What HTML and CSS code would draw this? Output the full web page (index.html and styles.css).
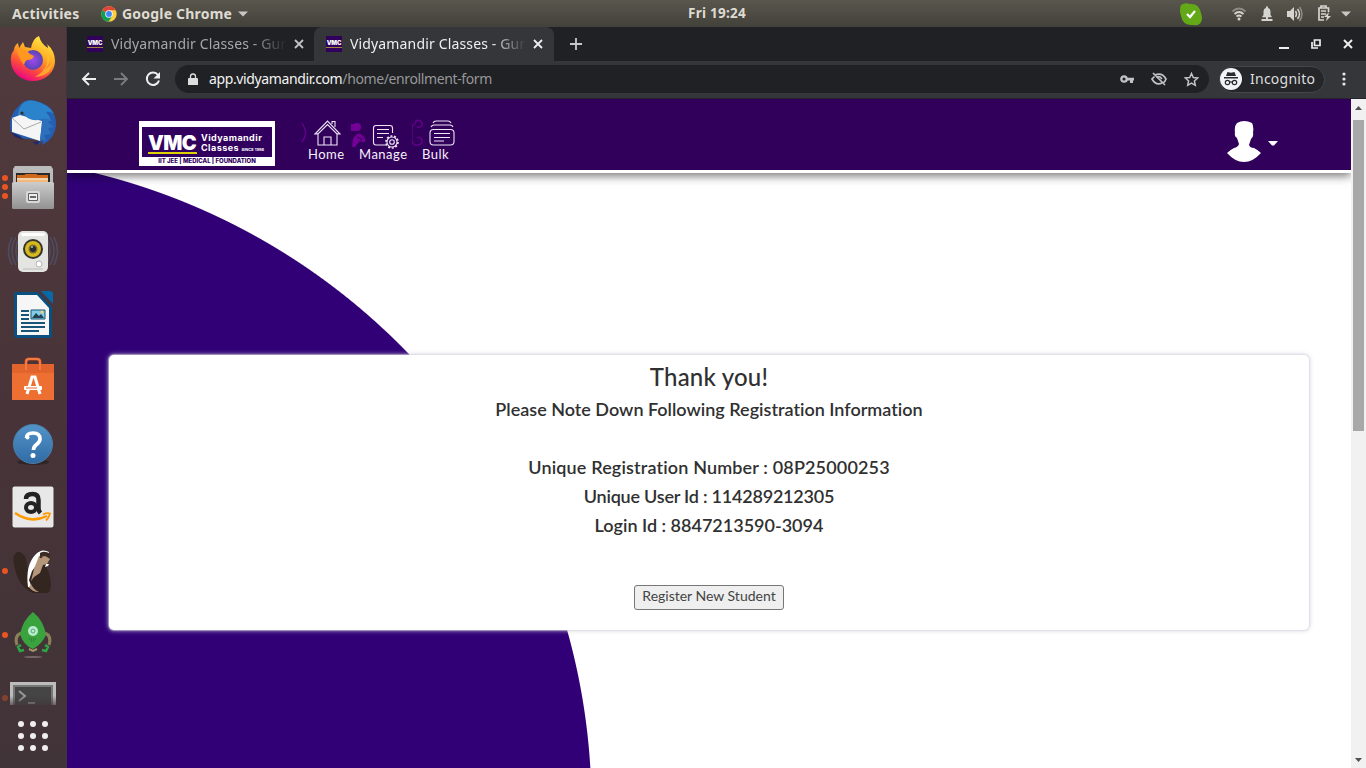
FILE: index.html
```html
<!DOCTYPE html>
<html lang="en">
<head>
<meta charset="utf-8">
<title>Vidyamandir Classes</title>
<link rel="stylesheet" href="styles.css">
</head>
<body>
<div class="desktop">
  <header class="topbar">
    <span class="activities">Activities</span>
    <svg class="chrome-logo" width="16" height="16" viewBox="0 0 16 16"><circle cx="8" cy="8" r="7.7" fill="#ffcd40"/><path d="M8 8 1.3 4.2A7.7 7.7 0 0 1 14.7 4.2H8Z" fill="#e0443a"/><path d="M1.3 4.2A7.7 7.7 0 0 0 7.5 15.7L11.3 10 8 8Z" fill="#0f9d58"/><circle cx="8" cy="8" r="3.8" fill="#f4f4f4"/><circle cx="8" cy="8" r="2.9" fill="#4285f4"/></svg>
    <span class="appname">Google Chrome</span>
    <svg class="app-caret" width="10" height="6" viewBox="0 0 10 6"><path d="M0 0.500h10L5 5.500Z" fill="#c8c7c4"/></svg>
    <span class="clock">Fri 19:24</span>
    <div class="tray">
      <svg width="24" height="24" viewBox="0 0 24 24"><path d="M2 3Q6 0 11 2Q20 1 22 11Q24 17 22 20Q20 24 14 23Q4 24 2 14Q0 7 2 3Z" fill="#63a917"/><path d="m8 12 3 3 5-6" fill="none" stroke="#fff" stroke-width="2.200"/></svg>
      <svg class="wifi" width="16" height="16" viewBox="0 0 16 16" fill="none" stroke="#d5d4d0" stroke-width="1.800"><path d="M1.500 5.500Q8-0.500 14.500 5.500" opacity=".45"/><path d="M3.500 8Q8 4 12.500 8M5.500 10.500Q8 8.500 10.500 10.500"/><circle cx="8" cy="13" r="1.500" fill="#d5d4d0" stroke="none"/></svg>
      <svg class="bell" width="14" height="16" viewBox="0 0 14 16" fill="#d5d4d0"><path d="M6 .5h2V2q2.500.5 2.500 4v3l1.200 1.500v.8H2.300v-.8L3.500 9V6Q3.500 2.500 6 2ZM6 11h2v2h4.500v2h-11v-2H6Z"/></svg>
      <svg class="sound" width="17" height="16" viewBox="0 0 17 16"><path d="M1 5h3l4-4v14l-4-4H1Z" fill="#d5d4d0"/><path d="M9.500 5q2 3 0 6M11.500 3q4 5 0 10" fill="none" stroke="#d5d4d0" stroke-width="1.500"/><path d="M13.500 1q5 7 0 14" fill="none" stroke="#8e8c85" stroke-width="1.500"/></svg>
      <svg class="battery" width="16" height="17" viewBox="0 0 16 17"><path d="M4 3V1h5v2h2.500v4M7 15H2V3h9M4 6h5M4 9h5M4 12h3" fill="none" stroke="#d5d4d0" stroke-width="1.700"/><path d="m12 7-5 5h3l-1 4 5-5h-3Z" fill="#d5d4d0"/></svg>
      <svg class="tray-caret" width="10" height="6" viewBox="0 0 10 6"><path d="M0 .5h10L5 5.500Z" fill="#c8c7c4"/></svg>
    </div>
  </header>
  <div class="workspace">
    <nav class="dock">
      <div class="app"><svg width="48" height="48" viewBox="0 0 48 48"><defs><linearGradient id="ff" x1=".8" y1="0" x2=".3" y2="1"><stop offset="0" stop-color="#fff14a"/><stop offset=".4" stop-color="#ffad24"/><stop offset=".7" stop-color="#ff5038"/><stop offset="1" stop-color="#e80089"/></linearGradient><radialGradient id="fp"><stop offset="0" stop-color="#a049ee"/><stop offset="1" stop-color="#5944b4"/></radialGradient></defs><path d="M5 15Q5 11 9 8l1 5 4-6 2 5 6 1Q24 3 30 1q2 8 9 12 0-2-1-4 8 7 8 17A22 20 0 0 1 2 26Q1 20 5 15Z" fill="url(#ff)"/><circle cx="24" cy="25" r="10" fill="url(#fp)"/><path d="M8 15q6-3 13 4l4 2q-1 4-7 4-3 2-3 5Q10 24 8 15Z" fill="#ff9820"/><path d="M36 12q9 13 0 22 5-2 8-7-2 14-18 15 18-10 10-30Z" fill="#ffbd2e" opacity=".75"/></svg></div>
      <div class="app"><svg width="50" height="50" viewBox="0 0 50 50"><path d="M12 7Q18 0 28 3q19 4 20 22 0 15-14 22l1-4-6 4 2-5L12 40 3 34Q-1 18 12 7Z" fill="#245fb1"/><path d="m4 20 8-3 22 6-2 20-28-9Z" fill="#f5f5f5"/><path d="m4 20 12 11 17-7" stroke="#aaa" fill="none"/><path d="M10 17Q12 0 27 3q15 4 19 13-4-3-8-2 4 4 5 9-8-3-13-1-10 1-14-6-4 1-6 1Z" fill="#2b84cb"/><path d="m35 20 10 2-5 2 6 5-6 1 3 6-7 1 2 6-6-2Z" fill="#2d70bc"/><path d="m3 34 9 4 4 4-9-3ZM24 44l9-1-4 4Z" fill="#242766"/><circle cx="14" cy="15" r="1.500" fill="#322c29"/></svg></div>
      <div class="app"><i class="dot dot-top"></i><i class="dot"></i><i class="dot dot-bottom"></i><svg width="44" height="46" viewBox="0 0 44 46"><defs><linearGradient id="fg" x2="0" y2="1"><stop stop-color="#ccc"/><stop offset="1" stop-color="#929292"/></linearGradient></defs><path d="M4 2h36l2 3v17H2V5Z" fill="#bbb"/><path d="M5 9h34v10H5Z" fill="#292929"/><path d="M6 11h7l2-1h10l2 1h10v8H6Z" fill="#cf691b"/><path d="M6 14h31v5H6Z" fill="#f2b87c"/><path d="M6 15h31" stroke="#f4ead7"/><rect x="1" y="18" width="42" height="27" rx="1.500" fill="url(#fg)"/><rect x="15" y="27" width="14" height="12" rx="2" fill="#d8d8d8"/><rect x="17" y="29" width="10" height="8" rx="1" fill="#606060"/><path d="M18 30h8v6h-8Z" fill="#eee"/><path d="M19 32h6v2h-6Z" fill="#666"/></svg></div>
      <div class="app"><svg width="50" height="46" viewBox="0 0 50 46"><path d="M8 9Q0 23 8 37M4 9Q-3 23 4 37M12 8Q4 23 12 38M42 9Q50 23 42 37M46 9Q53 23 46 37M38 8Q46 23 38 38" fill="none" stroke="#536b92" stroke-width="1.500" opacity=".45"/><rect x="10" y="3" width="30" height="41" rx="5" fill="#e4e4e0"/><rect x="13" y="5" width="24" height="3" rx="2" fill="#fff"/><circle cx="25" cy="21" r="10" fill="#34342f"/><circle cx="25" cy="21" r="8" fill="#d8b91d"/><circle cx="25" cy="21" r="4.500" fill="#796f2e"/><circle cx="25" cy="21" r="3" fill="#292b30"/><path d="M23 19h2" stroke="#fff"/><circle cx="31" cy="36" r="3" fill="#fff" stroke="#b5b5b5"/><path d="M15 41h20" stroke="#bbb"/></svg></div>
      <div class="app"><svg width="40" height="48" viewBox="0 0 40 48"><path d="M3 1h22l14 15v29q0 2-3 2H4q-3 0-3-3V3Q1 1 3 1Z" fill="#0b4f81"/><path d="M4 4h20l12 13v27H4Z" fill="#f6f6f6"/><path d="M28 0h9q3 0 3 3v10Z" fill="#0869a8"/><path d="M8 20h8M8 24h8M8 28h8M8 32h24M8 36h24M8 40h18" stroke="#165579" stroke-width="2"/><path d="M18 19h14v9H18Z" fill="#83cce9" stroke="#175777"/><path d="m19 27 4-5 3 3 2-2 3 4Z" fill="#244150"/><circle cx="29" cy="21" r="1.500" fill="#f7cf63"/></svg></div>
      <div class="app"><svg width="44" height="46" viewBox="0 0 44 46"><path d="M15 13V6q0-3 3-3h8q3 0 3 3v7" fill="none" stroke="#c64a1d" stroke-width="3"/><path d="M1 8h42v36H1Z" fill="#ed7032"/><path d="M1 8h42v9H1Z" fill="#e2632b"/><path d="M15 14V6q0-3 3-3h8q3 0 3 3v8" fill="none" stroke="#f37a45" stroke-width="2"/><path d="m16 38 5-17h3l5 17" fill="none" stroke="#fff" stroke-width="3"/><rect x="13" y="30" width="18" height="4" rx="1" fill="#fff"/><path d="M15 32h11" stroke="#ec6b2d"/></svg></div>
      <div class="app"><svg class="help-icon" width="42" height="44" viewBox="0 0 42 44"><defs><linearGradient id="help" x2="0" y2="1"><stop stop-color="#5394c8"/><stop offset="1" stop-color="#306ba6"/></linearGradient></defs><ellipse cx="21" cy="39" rx="16" ry="3" fill="#302529"/><circle cx="21" cy="21" r="19.500" fill="url(#help)" stroke="#4a80a8"/><path d="M14.500 15q0-5 6.500-5 7 0 7 6 0 3-4 6-2.500 2-2.500 5" fill="none" stroke="#fff" stroke-width="3.600"/><circle cx="15.500" cy="14.500" r="2" fill="#fff"/><circle cx="21" cy="32.500" r="2.500" fill="#fff"/></svg></div>
      <div class="app"><svg width="42" height="42" viewBox="0 0 42 42"><rect x=".5" y=".5" width="41" height="41" rx="2" fill="#e8e8e8"/><path d="M14 13q0-5 6.500-5 6 0 6 6v8q0 3 2 5" fill="none" stroke="#222" stroke-width="4.500"/><ellipse cx="19" cy="21.500" rx="5" ry="4.500" fill="none" stroke="#222" stroke-width="4"/><path d="M3 27q16 11 32 3" fill="none" stroke="#ff9900" stroke-width="2.500"/><path d="M31 28.500q4-2 7-1-1 4-4 7" fill="none" stroke="#ff9900" stroke-width="1.800"/></svg></div>
      <div class="app"><i class="dot"></i><svg width="42" height="48" viewBox="0 0 42 48"><path d="M21 46Q7 40 3 22-1 9 5 5q9 0 10 13l3 15q-2-20 9-29l10 2 1 7-4 6q7 14 4 25l-3 2Z" fill="#33251f"/><path d="M16 40q-3-22 8-33 6-6 13-2l-1 2-8 3-2 6-6 8-3 9 3 8Z" fill="#fff"/><path d="m27 9 6-1 5 4-3 5-4 1-3 8-6 4-3 4 3-12Z" fill="#b4967a"/><path d="M28 6q5-3 10 1l-1 4-4-2-5 1Z" fill="#3b2b25"/><circle cx="29" cy="10" r="1.300" fill="#493225"/><path d="M34 17h3l-1 2-3 1Z" fill="#fff"/><path d="M19 37q2 5 8 8-7 0-10-5Z" fill="#b4967a"/></svg></div>
      <div class="app"><i class="dot"></i><svg width="38" height="50" viewBox="0 0 38 50"><path d="M7 23q-7 3-4 12M31 23q7 3 4 12" fill="none" stroke="#8b805c" stroke-width="3"/><path d="M19 2Q30 11 32 25q-4 9-13 14Q9 35 6 24 9 10 19 2Z" fill="#3ba33e"/><path d="m15 39 4 2 4-2" stroke="#a39768" stroke-width="2" fill="none"/><circle cx="19" cy="21" r="5" fill="#b9edce"/><circle cx="19" cy="21" r="2" fill="none" stroke="#58a775"/><path d="M15 29h8M17 31h4" stroke="#226b32" stroke-dasharray="1 1"/><path d="m10 40-4 1-2-4 3-2M28 40l4 1 2-4-3-2" stroke="#2ca744" stroke-width="2.500" fill="none"/><ellipse cx="19" cy="47" rx="9" ry="1" fill="#75666a"/></svg></div>
      <div class="app terminal"><i class="dot dim"></i><svg width="46" height="23" viewBox="0 0 46 23"><defs><linearGradient id="tf" x2="0" y2="1"><stop stop-color="#fff"/><stop offset=".6" stop-color="#fff"/><stop offset="1" stop-color="#555"/></linearGradient><mask id="tm"><path d="M0 0h46v23H0Z" fill="url(#tf)"/></mask></defs><g mask="url(#tm)"><path d="M0 0h46v23H0Z" fill="#bcbcbc"/><path d="M3 3h40v20H3Z" fill="#777"/><path d="M5 5h36v18H5Z" fill="#454545"/><path d="m9 9 6 5-6 5M18 21h7" stroke="#999" stroke-width="2" fill="none"/></g></svg></div>
      <div class="app-grid"><i></i><i></i><i></i><i></i><i></i><i></i><i></i><i></i><i></i></div>
    </nav>
    <main class="browser">
      <div class="tabs">
        <div class="tab">
          <span class="favicon">VMC</span><span class="tab-title"><span>Vidyamandir Classes - Gur</span></span>
          <svg width="10" height="10" viewBox="0 0 10 10"><path d="m1 1 8 8M9 1 1 9" stroke="#c2c3c5" stroke-width="1.800"/></svg>
        </div>
        <div class="tab active">
          <span class="favicon">VMC</span><span class="tab-title"><span>Vidyamandir Classes - Gur</span></span>
          <svg width="10" height="10" viewBox="0 0 10 10"><path d="m1 1 8 8M9 1 1 9" stroke="#eee" stroke-width="1.800"/></svg>
        </div>
        <svg class="new-tab" width="12" height="12" viewBox="0 0 12 12"><path d="M6 0v12M0 6h12" stroke="#c7c8ca" stroke-width="1.800"/></svg>
        <div class="window-buttons">
          <svg width="10" height="10" viewBox="0 0 10 10"><path d="M0 9h10" stroke="#eee" stroke-width="2"/></svg>
          <svg width="10" height="10" viewBox="0 0 10 10" fill="none" stroke="#eee" stroke-width="1.700"><path d="M3.500 1H9v5.500H3.500ZM1 3v6h6"/></svg>
          <svg width="10" height="10" viewBox="0 0 10 10"><path d="m1 1 8 8M9 1 1 9" stroke="#eee" stroke-width="2"/></svg>
        </div>
      </div>
      <div class="toolbar">
        <svg class="nav-icon" width="16" height="14" viewBox="0 0 16 14" fill="none" stroke="#eee" stroke-width="1.900"><path d="M15 7H2M8 1 2 7l6 6"/></svg>
        <svg class="nav-icon" width="16" height="14" viewBox="0 0 16 14" fill="none" stroke="#7b7b7f" stroke-width="1.900"><path d="M1 7h13M8 1l6 6-6 6"/></svg>
        <svg class="nav-icon" width="16" height="16" viewBox="0 0 16 16"><path d="M13 4A6.200 6.200 0 1 0 14 9.500" fill="none" stroke="#eee" stroke-width="2"/><path d="M15 1v6.500H8.500Z" fill="#eee"/></svg>
        <div class="address">
          <svg class="lock" width="10" height="13" viewBox="0 0 10 13"><path d="M1 5h8q1 0 1 1v6H0V6q0-1 1-1Z" fill="#ddd"/><path d="M2.500 5V3.500a2.500 2.500 0 0 1 5 0V5" fill="none" stroke="#ddd" stroke-width="1.300"/></svg>
          <span class="url"><b>app.vidyamandir.com</b>/home/enrollment-form</span>
          <svg class="key" width="14" height="8" viewBox="0 0 14 8"><circle cx="4" cy="4" r="2.700" fill="none" stroke="#c2c2c5" stroke-width="2.300"/><path d="M6 2.800h8v2.700h-1V8h-3V5.500H6Z" fill="#c2c2c5"/></svg>
          <svg class="eye" width="16" height="14" viewBox="0 0 16 14" fill="none" stroke="#c2c2c5" stroke-width="1.700"><path d="M4 3Q11 0 15 7q-1 3-3 4M3.500 4.500 1 7q4 7 10 4M2 1l12 12"/><path d="M6 6q1-2 3-1l2 2"/></svg>
          <svg class="star" width="15" height="15" viewBox="0 0 15 15"><path d="m7.500 1.500 1.800 4.100 4.400.4-3.300 3 .9 4.300-3.800-2.200-3.800 2.200.9-4.300-3.300-3 4.400-.4Z" fill="none" stroke="#c2c2c5" stroke-width="1.500"/></svg>
        </div>
        <div class="incognito">
          <svg width="22" height="22" viewBox="0 0 22 22"><circle cx="11" cy="11" r="11" fill="#f1f3f4"/><path d="m6 8 1.500-4 3.500.7 3.500-.7L16 8ZM4 9h14v1.500H4Z" fill="#292a2d"/><g fill="none" stroke="#292a2d" stroke-width="1.200"><circle cx="7.500" cy="14.500" r="2.200"/><circle cx="14.500" cy="14.500" r="2.200"/><path d="M9.700 14h2.600"/></g></svg>
          <span>Incognito</span>
        </div>
        <svg class="menu" width="4" height="14" viewBox="0 0 4 14" fill="#e8e8e8"><circle cx="2" cy="2" r="1.600"/><circle cx="2" cy="7" r="1.600"/><circle cx="2" cy="12" r="1.600"/></svg>
      </div>
      <div class="viewport">
        <div class="page">
          <header class="site-header">
            <div class="logo">
              <div class="logo-panel"><span class="logo-mark">VMC</span><div class="logo-name"><span>Vidyamandir</span><span>Classes <small>SINCE 1986</small></span></div></div>
              <div class="logo-line">IIT JEE | MEDICAL | FOUNDATION</div>
            </div>
            <div class="site-nav">
              <a class="nav-home"><svg width="52" height="32" viewBox="0 0 52 32"><path d="M1 5q7 10 0 19" fill="none" stroke="#650092" stroke-width="1.300"/><g fill="none" stroke="#eee5f5" stroke-width="1.100"><path d="M14 16 26.500 3 39 16h-3L26.500 6.500 17 16ZM17 15v12h19V15M23 27v-8h7v8M31 6V3.500h3V9"/></g></svg><span>Home</span></a>
              <a class="nav-manage"><svg width="54" height="32" viewBox="0 0 54 32"><circle cx="7" cy="9" r="4" fill="#750096"/><path d="M1 6h5v7H1M3 21q6-11 12 0v3H9l-4 5H2Z" fill="#750096"/><path d="m7 19 5 2-3 4" fill="none" stroke="#30005b"/><g fill="none" stroke="#eee5f5" stroke-width="1.100"><path d="M36 27H26q-2.500 0-2.500-2.500V10Q23.500 7.500 26 7.500h14q2.500 0 2.500 2.500v5M27 11.500h12M27 15.500h12M27 19.500h6"/><circle cx="42" cy="24" r="2.300"/><circle cx="42" cy="24" r="5"/><circle cx="42" cy="24" r="6" stroke-dasharray="2 1.700" stroke-width="1.700"/></g></svg><span>Manage</span></a>
              <a class="nav-bulk"><svg width="48" height="32" viewBox="0 0 48 32"><path d="M5 9H8q3-1 2-4-2-4-6-2l-1 3M3 7H1Q0 7 0 9v14q1 5 6 4 5-1 4-5-2-4-5-2" fill="none" stroke="#620089" stroke-width="1.500"/><g fill="none" stroke="#eee5f5" stroke-width="1.100"><rect x="18" y="11.500" width="24" height="15.500" rx="3.500"/><path d="M19 9q1-2 3-2h16q2 0 3 2M21 5q1-2 3-2h12q2 0 3 2M22 15.500h16M22 19.500h16M22 23h10"/></g></svg><span>Bulk</span></a>
            </div>
            <div class="profile"><svg width="34" height="41" viewBox="0 0 34 41"><path d="M10 2Q17-2 25 2q2 3 1 10 1 3-2 6-1 3-2 6 1 3 5 3 4 2 7 5-8 9-17 9T0 32q3-3 7-5 4-1 5-4l-2-6q-3-2-2-5-1-7 2-10Z" fill="#fff"/></svg><svg class="profile-caret" width="10" height="5" viewBox="0 0 10 5"><path d="M0 0h10L6 4.500H4Z" fill="#fff"/></svg></div>
          </header>
          <section class="content">
            <div class="card">
              <h1>Thank you!</h1>
              <p class="note">Please Note Down Following Registration Information</p>
              <p class="reg">Unique Registration Number : 08P25000253</p>
              <p class="user">Unique User Id : 114289212305</p>
              <p class="login">Login Id : 8847213590-3094</p>
              <button>Register New Student</button>
            </div>
          </section>
        </div>
        <div class="scrollbar"><svg width="7" height="4" viewBox="0 0 7 4"><path d="M0 4h7L3.500 0Z" fill="#505050"/></svg><i></i><svg width="7" height="4" viewBox="0 0 7 4"><path d="M0 0h7L3.500 4Z" fill="#505050"/></svg></div>
      </div>
    </main>
  </div>
</div>
</body>
</html>
```

FILE: styles.css
```css
* { box-sizing: border-box; }
body { margin: 0; overflow: hidden; font-family: "Noto Sans", sans-serif; }
p, h1 { margin: 0; }
svg { display: block; flex: none; }
.desktop { width: 1366px; height: 768px; display: flex; flex-direction: column; }
.topbar { height: 27px; flex: none; display: grid; grid-template-columns: 101px 21px 116px 10px 1fr 176px; align-items: center; background: linear-gradient(#59564d, #42413a); color: #dfdbd2; font-size: 14px; font-weight: 700; white-space: nowrap; }
.activities { padding-left: 12px; letter-spacing: .25px; }
.appname { letter-spacing: .2px; }
.clock { padding-left: 440px; letter-spacing: .25px; font-size: 13.500px; margin-top: -2px; }
.tray { display: flex; align-items: center; margin-left: -11px; }
.wifi { margin-left: 28px; }
.bell { margin-left: 13px; }
.sound { margin-left: 12px; }
.battery { margin-left: 14px; }
.tray-caret { margin-left: 8px; }
.workspace { display: flex; flex: 1; min-height: 0; }
.dock { width: 67px; background: linear-gradient(#523b3e, #473338 55%, #413438); display: flex; flex-direction: column; border-right: 1px solid #41343e; }
.app { position: relative; height: 64px; display: flex; align-items: center; justify-content: center; flex: none; }
.app > svg { overflow: visible; }
.help-icon { margin-top: 3px; }
.terminal { height: 47px; align-items: flex-start; padding-top: 15px; }
.dot { position: absolute; width: 6px; height: 6px; left: 2px; top: 29px; border-radius: 50%; background: #e95420; }
.dot-top { top: 20px; }
.dot-bottom { top: 38px; }
.dim { opacity: .4; top: 28px; }
.app-grid { display: grid; grid-template-columns: repeat(3, 6px); gap: 6px; padding: 7px 0 0 18px; }
.app-grid i { width: 6px; height: 6px; background: #f0eeee; border-radius: 50%; }
.browser { width: 1299px; display: flex; flex-direction: column; background: #35363a; }
.tabs { height: 34px; flex: none; display: flex; align-items: center; background: #202124; }
.tab { width: 247px; height: 34px; display: flex; align-items: center; padding-left: 20px; color: #a6a7ab; font-size: 14px; }
.active { width: 240px; padding-left: 12px; background: #35363a; border-radius: 8px 8px 0 0; color: #eee; }
.favicon { width: 16px; height: 16px; background: #31005b; color: #fff; font: 900 6px/14px Inter, sans-serif; text-align: center; border-bottom: 4px solid #31005b; box-shadow: inset 0 -1px #9d843e; flex: none; letter-spacing: -.2px; }
.tab-title { width: 176px; margin: -2px 7px 0 8px; overflow: hidden; white-space: nowrap; letter-spacing: .15px; -webkit-mask-image: linear-gradient(90deg, #000 80%, transparent 100%); mask-image: linear-gradient(90deg, #000 80%, transparent 100%); }
.new-tab { margin-left: 16px; }
.window-buttons { display: flex; gap: 22px; margin: 0 13px 0 auto; }
.toolbar { height: 37px; flex: none; display: flex; align-items: center; padding: 1px 0 2px 14px; }
.nav-icon { margin-right: 16px; }
.address { width: 1034px; height: 28px; margin-left: -2px; border-radius: 14px; background: #202124; display: flex; align-items: center; padding-left: 13px; }
.url { width: 911px; margin: -2px 0 0 11px; color: #96979a; font-size: 14px; letter-spacing: -.38px; white-space: nowrap; }
.url b { color: #f3f3f3; font-weight: 400; }
.eye { margin-left: 17px; }
.star { margin-left: 17px; }
.incognito { width: 106px; height: 27px; margin-left: 10px; border: 1px solid #45464a; background: #25262a; border-radius: 14px; display: flex; align-items: center; color: #ddd; font-size: 14px; }
.incognito span { margin: -2px 0 0 8px; letter-spacing: .25px; }
.menu { margin-left: 17px; }
.viewport { display: flex; flex: 1; min-height: 0; border-top: 1px solid #25252b; }
.page { width: 1284px; background: radial-gradient(circle at -128.300px 707.900px, #310077 652.300px, #fff 653.300px); display: flex; flex-direction: column; overflow: hidden; }
.site-header { height: 74px; flex: none; display: flex; background: #30005b; border-bottom: 3px solid #fff; box-shadow: 0 3px 9px #0008; padding: 22px 0 0 72px; }
.logo { width: 136px; height: 45px; background: #fff; padding: 6px 3px 0; }
.logo-panel { height: 30px; display: flex; background: #31005e; color: #fff; padding: 5px 0 0 6px; }
.logo-mark { height: 22px; width: 49px; font: 900 20px/22px Inter, sans-serif; letter-spacing: -.6px; border-bottom: 2px solid #dbd200; }
.logo-name { display: flex; flex-direction: column; font: 700 9.500px/10px Inter, sans-serif; letter-spacing: .15px; margin: 1px 0 0 4px; white-space: nowrap; }
.logo-name span { display: block; height: 10px; font-size: 9px; letter-spacing: .45px; }
.logo-name small { font-size: 4px; line-height: 4px; letter-spacing: 0; }
.logo-line { color: #31005e; font: 800 6px/7px Inter, sans-serif; text-align: center; white-space: nowrap; }
.site-nav { display: flex; margin-left: 26px; color: #f7f1fa; font: 13px/16px Lato, sans-serif; letter-spacing: .5px; }
.site-nav a { display: flex; flex-direction: column; width: 49px; margin-top: -3px; }
.site-nav svg { height: 32px; margin-bottom: -4px; }
.site-nav span { padding-left: 7px; }
.site-nav .nav-manage { width: 62px; }
.site-nav .nav-manage span { padding-left: 9px; }
.site-nav .nav-bulk span { padding-left: 10px; }
.profile { display: flex; align-items: center; height: 41px; margin: 0 0 0 auto; padding-right: 73px; gap: 7px; }
.profile-caret { margin-top: 4px; }
.content { flex: 1; padding: 182px 0 0 42px; }
.card { width: 1200px; height: 275px; border-radius: 5px; background: #fff; box-shadow: 0 0 1px 1px #d4d4de88, 0 0 4px 1px #ccccdcaa; text-align: center; color: #303030; font-family: Lato, sans-serif; font-variant-ligatures: none; display: flex; flex-direction: column; align-items: center; }
.card h1 { font-size: 24px; font-weight: 500; line-height: 30px; margin-top: 7px; letter-spacing: .2px; }
.card p { font-size: 18px; font-weight: 600; line-height: 29px; }
.card .note { margin-top: 3px; margin-bottom: 29px; }
.card .reg { letter-spacing: .15px; }
.card .user { letter-spacing: -.22px; }
.card button { width: 150px; height: 25px; margin-top: 45px; padding: 0 0 3px; border: 1px solid #767676; border-radius: 3px; background: #efefef; color: #444; font: 14px/20px Lato, sans-serif; }
.scrollbar { width: 15px; flex: none; background: #f1f1f1; display: flex; flex-direction: column; align-items: center; padding: 7px 0 6px; }
.scrollbar i { width: 11px; height: 311px; margin-top: 10px; margin-bottom: auto; background: #a8a8a8; }
```
